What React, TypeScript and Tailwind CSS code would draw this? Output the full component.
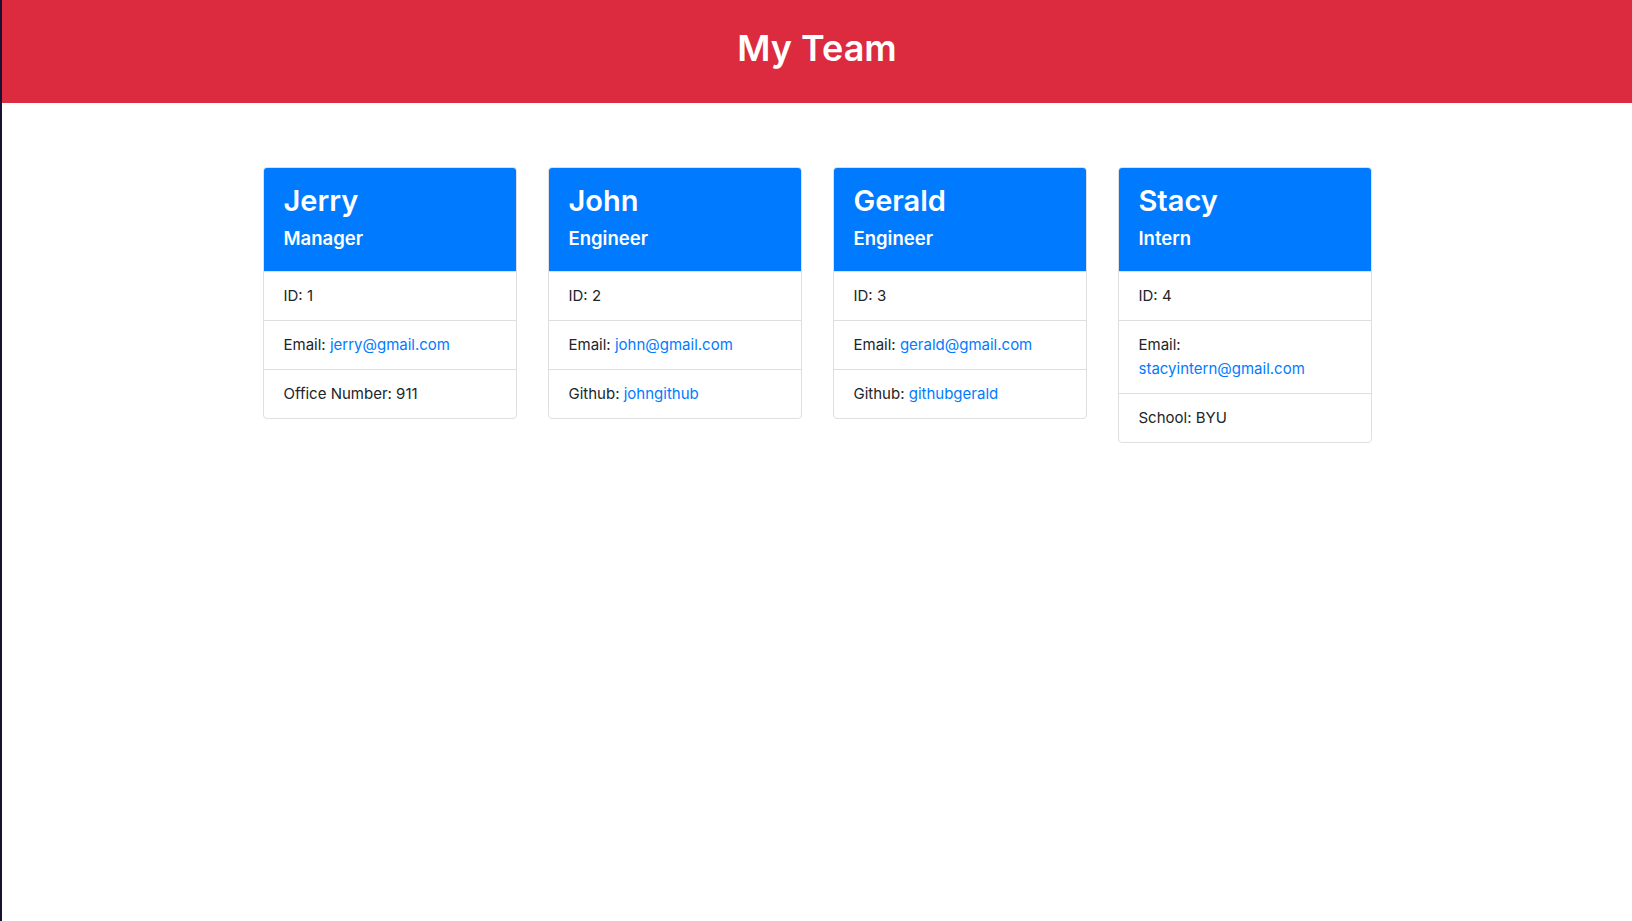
import React from 'react';

type Member = {
    name: string;
    role: string;
    id: number;
    email: string;
    extraLabel: string;
    extraValue: string;
    extraLink?: boolean;
};

const team: Member[] = [
    { name: 'Jerry', role: 'Manager', id: 1, email: 'jerry@gmail.com', extraLabel: 'Office Number', extraValue: '911' },
    { name: 'John', role: 'Engineer', id: 2, email: 'john@gmail.com', extraLabel: 'Github', extraValue: 'johngithub', extraLink: true },
    { name: 'Gerald', role: 'Engineer', id: 3, email: 'gerald@gmail.com', extraLabel: 'Github', extraValue: 'githubgerald', extraLink: true },
    { name: 'Stacy', role: 'Intern', id: 4, email: 'stacyintern@gmail.com', extraLabel: 'School', extraValue: 'BYU' },
];

function MemberCard({ m }: { m: Member }) {
    return (
        <div className="w-[254px] border border-[#dfdfdf] rounded-[4px] overflow-hidden bg-white">
            <div className="bg-[#007bff] text-white px-5 pt-[15px] pb-[22px]">
                <h2 className="text-[29px] leading-[35px] font-semibold mb-[9px]">{m.name}</h2>
                <h5 className="text-[18.5px] leading-[22px] font-semibold">{m.role}</h5>
            </div>
            <ul className="text-[15px] leading-[24px] text-[#212529]">
                <li className="px-5 py-3 border-t border-[#dfdfdf]">ID: {m.id}</li>
                <li className="px-5 py-3 border-t border-[#dfdfdf]">
                    Email: <a href={`mailto:${m.email}`} className="text-[#007bff]">{m.email}</a>
                </li>
                <li className="px-5 py-3 border-t border-[#dfdfdf]">
                    {m.extraLabel}:{' '}
                    {m.extraLink ? (
                        <a href={`https://github.com/${m.extraValue}`} className="text-[#007bff]">{m.extraValue}</a>
                    ) : (
                        m.extraValue
                    )}
                </li>
            </ul>
        </div>
    );
}

export default function App() {
    return (
        <div className="min-h-screen bg-white border-l-2 border-[#1a1033] font-['Inter',sans-serif]">
            <header className="bg-[#dc2a3f] h-[103px] pt-[26px] text-center">
                <h1 className="text-white text-[36px] leading-[44px] font-semibold">My Team</h1>
            </header>
            <main className="flex justify-center items-start gap-[31px] mt-16">
                {team.map((m) => (
                    <MemberCard key={m.id} m={m} />
                ))}
            </main>
        </div>
    );
}
